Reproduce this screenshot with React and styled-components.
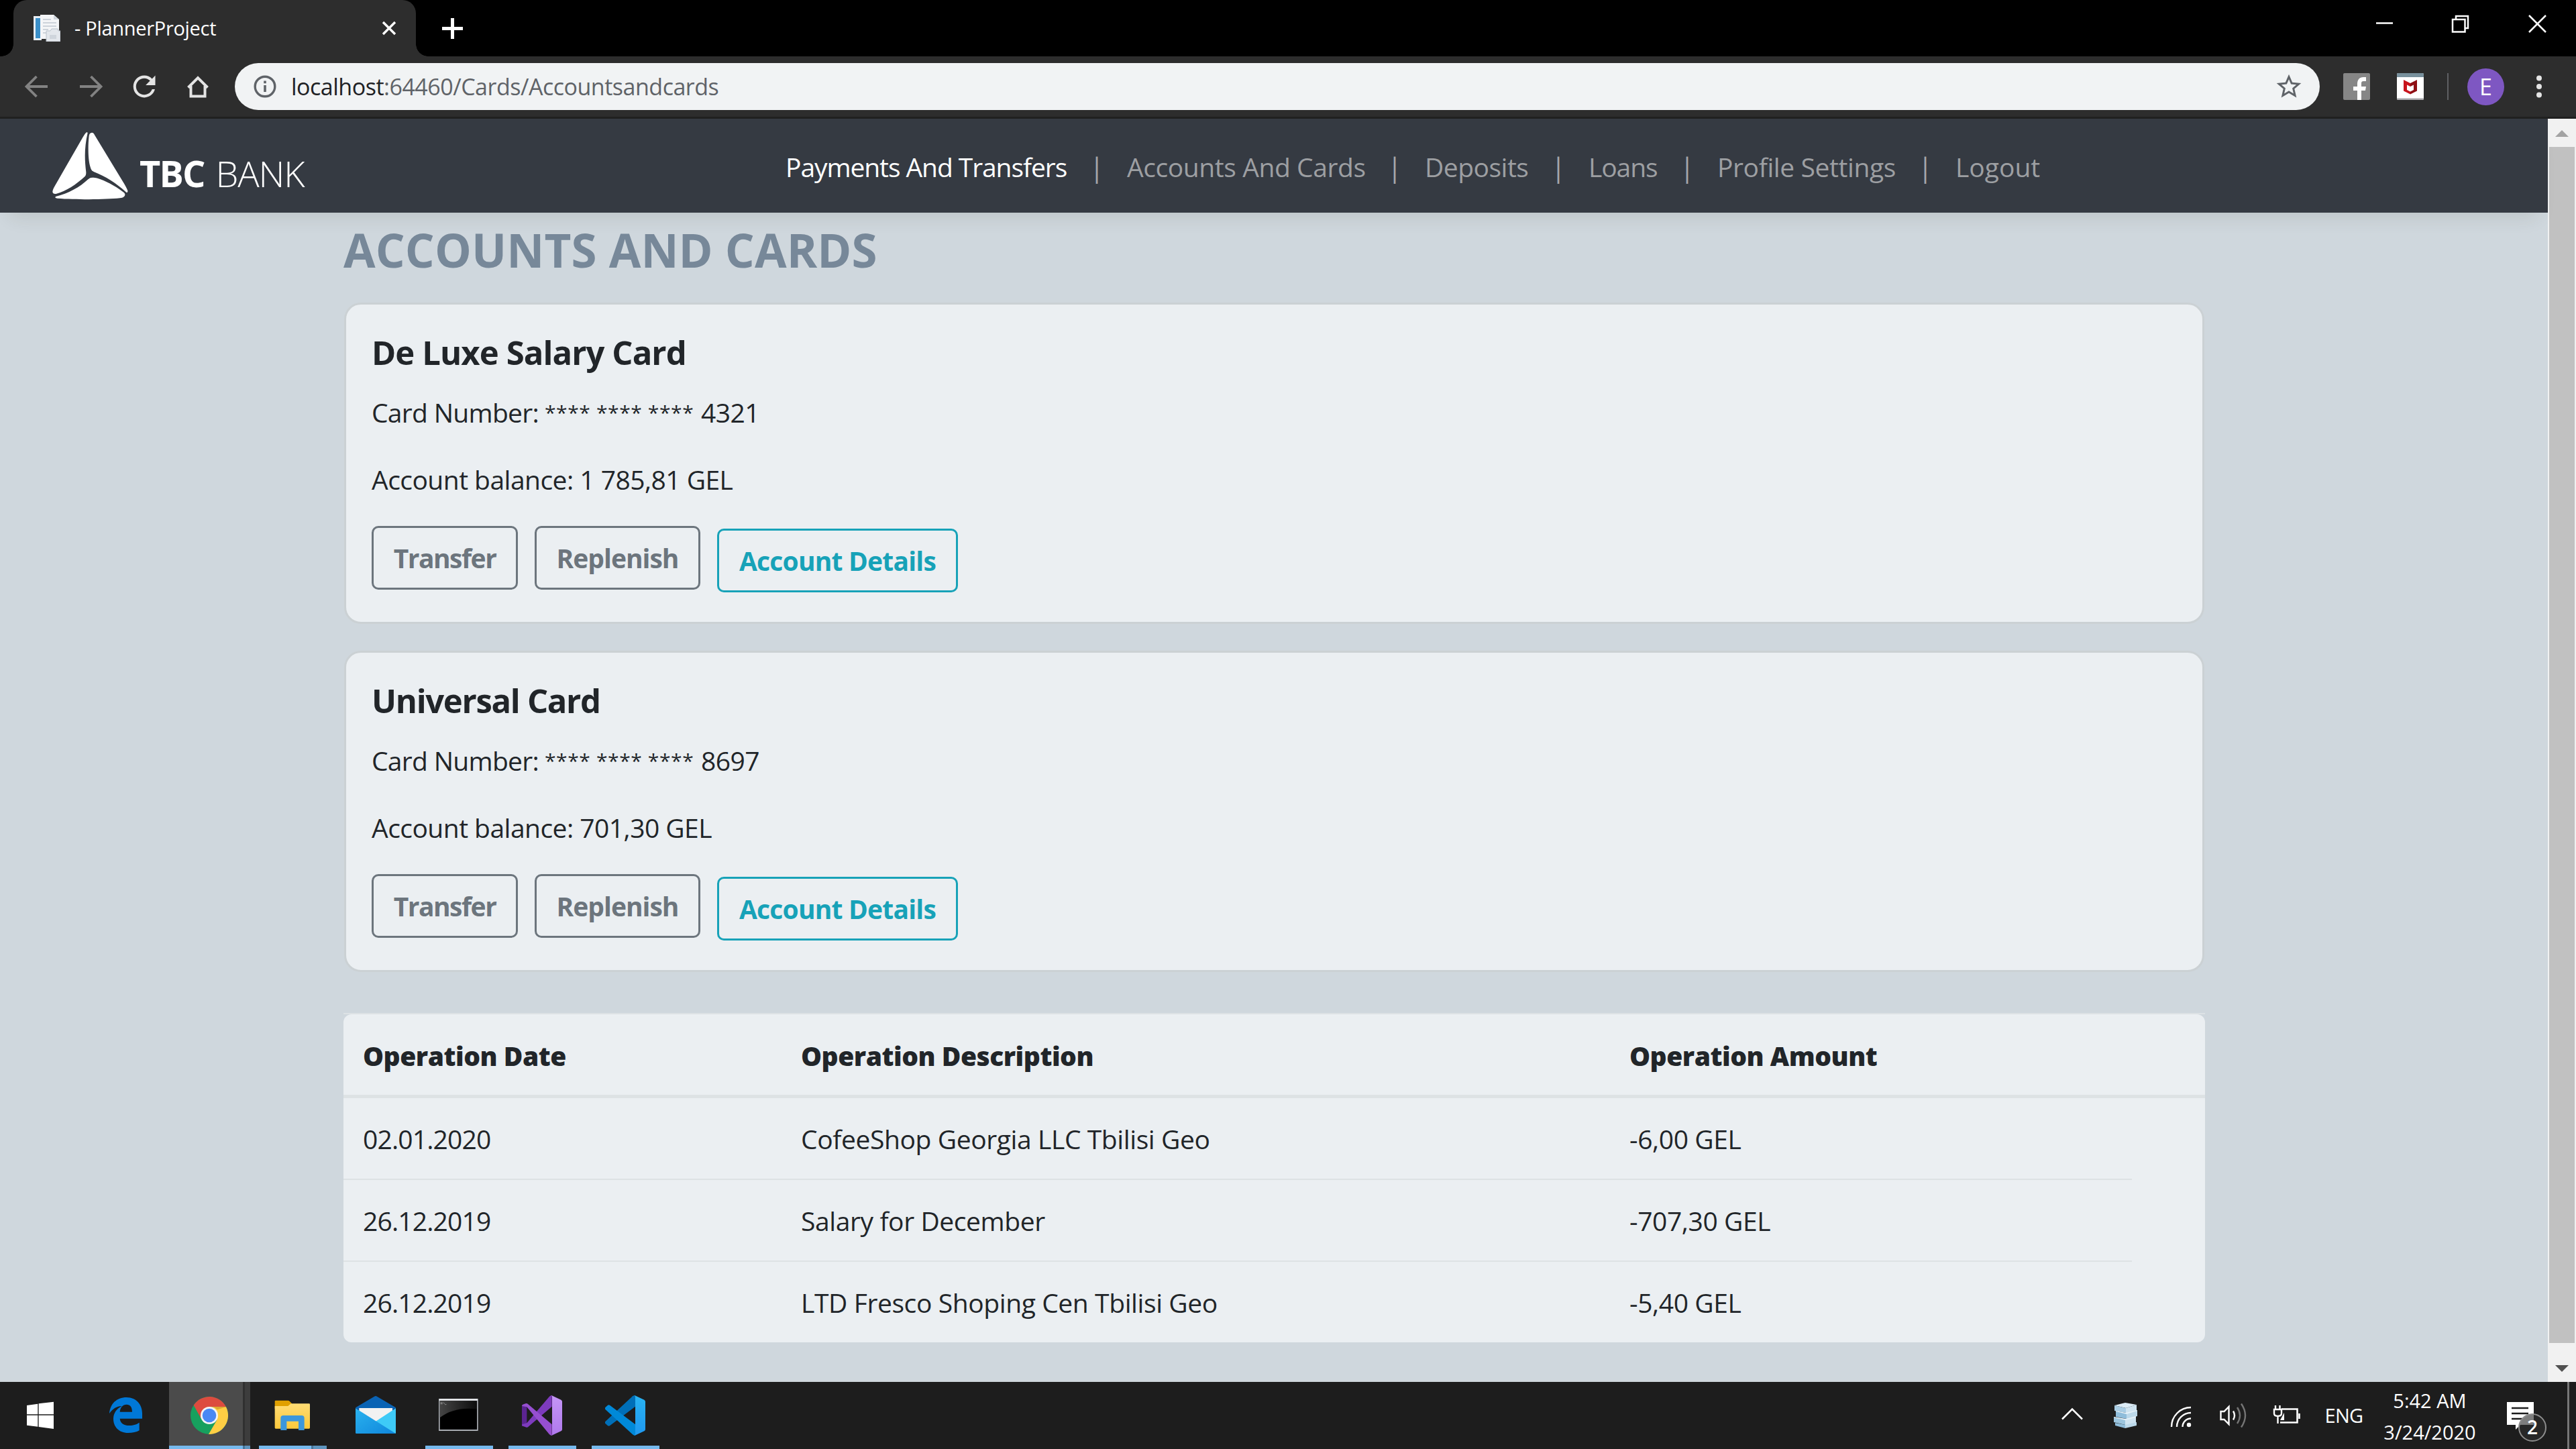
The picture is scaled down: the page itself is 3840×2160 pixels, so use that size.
import React from 'react';
import styled, { createGlobalStyle, css } from 'styled-components';

const GlobalStyle = createGlobalStyle`
  *, *::before, *::after { box-sizing: border-box; }
  html, body { margin: 0; padding: 0; overflow: hidden; background: #000; }
  body { font-family: "Open Sans", "Noto Sans", sans-serif; color: #212529; }
  svg { display: block; flex: none; }
`;

const Screen = styled.div`
  display: flex;
  flex-direction: column;
  width: 3840px;
  height: 2160px;
  overflow: hidden;
`;

/* ---------- browser chrome ---------- */

const TabStrip = styled.header`
  display: flex;
  height: 84px;
  padding-left: 20px;
  background: #000;
  color: #fff;
`;

const Tab = styled.div`
  position: relative;
  display: flex;
  align-items: center;
  width: 600px;
  height: 84px;
  padding: 0 28px 0 30px;
  border-radius: 20px 20px 0 0;
  background: #2d2d2d;

  &::before, &::after {
    content: '';
    position: absolute;
    bottom: 0;
    width: 18px;
    height: 18px;
  }
  &::before { right: 100%; background: radial-gradient(circle at 0 0, transparent 17.5px, #2d2d2d 18px); }
  &::after { left: 100%; background: radial-gradient(circle at 100% 0, transparent 17.5px, #2d2d2d 18px); }
`;

const TabTitle = styled.span`
  flex: 1;
  padding-left: 21px;
  font-size: 29px;
  line-height: 84px;
  letter-spacing: -0.3px;
  white-space: nowrap;
`;

const NewTab = styled.div`
  display: flex;
  align-items: center;
  padding-left: 36px;
`;

const WindowButtons = styled.div`
  display: flex;
  margin-left: auto;
`;

const Toolbar = styled.div`
  display: flex;
  align-items: center;
  height: 93px;
  padding-left: 15px;
  background: #2d2d2d;
  border-bottom: 3px solid #202020;
`;

const ToolbarButtons = styled.div`
  display: flex;
  width: 335px;
`;

const AddressBar = styled.div`
  display: flex;
  align-items: center;
  width: 3108px;
  height: 70px;
  padding: 0 24px;
  border-radius: 35px;
  background: #f1f3f4;
`;

const Url = styled.span`
  flex: 1;
  padding-left: 18px;
  font-size: 34px;
  line-height: 70px;
  letter-spacing: -0.49px;
  color: #5f6368;
  white-space: nowrap;
`;

const Host = styled.span`
  color: #202124;
`;

const Extensions = styled.div`
  display: flex;
  align-items: center;
  padding-left: 35px;
`;

const ExtDivider = styled.div`
  width: 2px;
  height: 40px;
  margin: 0 28px 0 35px;
  background: #5f6063;
`;

const Avatar = styled.div`
  width: 55px;
  height: 55px;
  border-radius: 50%;
  background: #7e57c2;
  color: #fff;
  font-size: 34px;
  line-height: 55px;
  text-align: center;
`;

/* ---------- page ---------- */

const Viewport = styled.div`
  display: flex;
  height: 1883px;
`;

const Page = styled.div`
  width: 3798px;
  background: #cfd7dd;
`;

const NavBar = styled.nav`
  position: relative;
  display: flex;
  align-items: center;
  height: 140px;
  padding-left: 77px;
  background: #353a42;
  box-shadow: 0 22px 26px -16px rgba(60, 60, 30, 0.12);
`;

const Brand = styled.div`
  display: flex;
  align-items: center;
  width: 1094px;
  color: #fff;
`;

const BrandText = styled.span`
  padding-left: 16px;
  margin-top: 22px;
  font-size: 54px;
  line-height: 70px;
  font-weight: 700;
  letter-spacing: -1.8px;
  white-space: nowrap;
`;

const BrandLight = styled.span`
  margin-left: 17px;
  font-weight: 300;
  letter-spacing: -1.2px;
`;

const NavLinks = styled.div`
  display: flex;
  gap: 40px;
  margin-top: 3px;
  line-height: 60px;
`;

const NavLink = styled.a`
  width: ${p => p.$width}px;
  font-size: 39px;
  letter-spacing: ${p => p.$tracking}px;
  color: ${p => (p.$active ? '#fff' : '#9d9fa2')};
  white-space: nowrap;
`;

const NavDivider = styled.span`
  display: flex;
  justify-content: center;
  width: 10px;
  font-size: 40px;
  color: #a5a7aa;
`;

const Main = styled.main`
  width: 2775px;
  margin-left: 512px;
  padding-top: 13px;
`;

const PageTitle = styled.h2`
  margin: 0 0 37px;
  font-size: 69px;
  line-height: 84px;
  font-weight: 700;
  letter-spacing: 0.12px;
  color: #778899;
  white-space: nowrap;
`;

const Card = styled.section`
  height: 479px;
  margin: 0 1px 40px;
  padding: 41px 37px 0 38px;
  border: 3px solid #cbd1d4;
  border-radius: 25px;
  background: #ebeff2;
`;

const CardTitle = styled.h4`
  margin: 0 0 30px;
  font-size: 49px;
  line-height: 60px;
  font-weight: 700;
  letter-spacing: ${p => p.$tracking}px;
`;

const CardLine = styled.p`
  display: flex;
  gap: 10px;
  margin: 0 0 40px;
  font-size: 39px;
  line-height: 60px;
  letter-spacing: -0.53px;
  white-space: pre;
`;

const LineLabel = styled.span`
  width: 248px;
  letter-spacing: -0.7px;
`;

const Mask = styled.span`
  width: 223px;
  font-size: 30px;
  line-height: 60px;
  letter-spacing: 0.6px;
`;

const Actions = styled.div`
  display: flex;
  gap: 25px;
  margin-top: -1px;
`;

const ActionButton = styled.button`
  width: ${p => p.$width}px;
  height: 95px;
  margin-top: ${p => (p.$info ? 4 : 0)}px;
  padding: 0;
  border: 3px solid currentColor;
  border-radius: 10px;
  background: transparent;
  font-family: inherit;
  font-size: 39px;
  font-weight: 700;
  line-height: 90px;
  letter-spacing: ${p => p.$tracking}px;
  white-space: nowrap;
  color: ${p => (p.$info ? '#17a2b8' : '#6c757d')};
`;

const Table = styled.div`
  margin-top: 61px;
  border-top: 2px solid #dde2e5;
`;

const TableBody = styled.div`
  border-radius: 12px;
  background: #ebeff2;
`;

const Cell = styled.div`
  display: flex;
  align-items: center;
  padding-left: 29px;
  white-space: nowrap;
`;

const rowGrid = css`
  display: grid;
  grid-template-columns: 653px 1235px 778px 109px;
`;

const HeadRow = styled.div`
  ${rowGrid}
  height: 125px;
  padding-top: 2px;
  border-bottom: 5px solid #dde2e4;
  font-size: 39px;
  font-weight: 800;
  letter-spacing: -0.48px;
`;

const Row = styled.div`
  ${rowGrid}
  height: ${p => p.$height}px;
  font-size: 39px;
  letter-spacing: -0.4px;

  ${Cell} { border-top: ${p => (p.$first ? 'none' : '2px solid #dde2e4')}; }
  ${Cell}:first-child { letter-spacing: -0.85px; }
`;

const Scrollbar = styled.div`
  display: flex;
  flex-direction: column;
  align-items: center;
  width: 42px;
  background: #f1f1f1;
`;

const ScrollThumb = styled.div`
  width: 38px;
  height: 1783px;
  margin-bottom: 16px;
  background: #c1c1c1;
`;

/* ---------- taskbar ---------- */

const Taskbar = styled.footer`
  display: flex;
  height: 100px;
  background: #1d1d1d;
  color: #fff;
`;

const Slot = styled.div`
  display: flex;
  flex-direction: column;
  align-items: center;
  width: 124px;
  padding-top: 20px;
  background: ${p => (p.$active ? 'linear-gradient(90deg, transparent 2px, #4b4b4b 2px 112px, #303030 112px 115px, #3d3d3d 115px 123px, transparent 123px)' : 'none')};
`;

const StartSlot = styled(Slot)`
  width: 120px;
  margin-right: 6px;
`;

const Underline = styled.div`
  width: ${p => (p.$wide ? 121 : 101)}px;
  height: 5px;
  margin-top: 15px;
  background: ${p => {
    if (p.$wide) return 'linear-gradient(90deg, #76b9ed 110px, #4a7598 110px 113px, #5e94be 113px)';
    if (p.$stacked) return 'linear-gradient(90deg, #76b9ed 78px, #4a7598 78px 81px, #5e94be 81px)';
    return '#76b9ed';
  }};
`;

const Tray = styled.div`
  display: flex;
  width: 791px;
  margin-left: auto;
`;

const Language = styled.div`
  width: 90px;
  font-size: 29px;
  line-height: 100px;
  letter-spacing: -0.7px;
  text-align: center;
`;

const Clock = styled.div`
  display: flex;
  flex-direction: column;
  align-items: center;
  width: 166px;
  padding-top: 4px;
  font-size: 29px;
  line-height: 47px;
  white-space: nowrap;
`;

const Notifications = styled.div`
  position: relative;
  width: 118px;
`;

const Badge = styled.div`
  position: absolute;
  left: 49px;
  top: 47px;
  width: 42px;
  height: 42px;
  border: 2px solid #8d8d8d;
  border-radius: 50%;
  background: rgba(45, 45, 45, 0.62);
  font-size: 28px;
  font-weight: 600;
  line-height: 37px;
  text-align: center;
`;

const DesktopEdge = styled.div`
  width: 3px;
  margin-left: 4px;
  background: #777;
`;

/* ---------- icons ---------- */

const Icon = ({ box, w, h, children }) => (
  <svg width={w} height={h} viewBox={box} fill="none">{children}</svg>
);

const Favicon = () => (
  <Icon box="50 22 40 40" w={40} h={40}>
    <path d="M50 24h12v36H50z" fill="#e8eef3" />
    <path d="M53 27h7v30h-7z" fill="#3a8fc9" />
    <path d="M60 22h20l8 7v29H60z" fill="#f4f5f7" />
    <path d="M80 22l8 7h-8z" fill="#cfd5dc" />
    <path d="M64 29h12M64 34h20M64 39h20M64 44h8M64 49h6" stroke="#cdd3da" strokeWidth="2" />
    <path d="M69 46h6l2-3h9l1 3h3v16H69z" fill="#e3e7ec" stroke="#b9c1ca" />
    <path d="M74 52h10v6H74z" fill="#cfd5dc" />
  </Icon>
);

const TbcMark = () => (
  <Icon box="140 48 345 306" w={115} h={102}>
    <g fill="#fff">
      <path d="M298 51C293 52 289 59 280 73L155 290C148 302 144 311 144 318C145 326 152 328 162 326C205 315 250 285 288 250C293 244 294 240 294 230C287 170 286 120 301 54Z" />
      <path d="M320 53C312 53 308 60 307 68C302 110 303 170 311 200C315 215 318 223 328 228C380 248 430 280 474 320Q481 323 480 313C475 300 470 292 465 283L333 65C329 57 326 53 320 53Z" />
      <path d="M322 254C312 254 308 258 303 262C265 298 215 325 158 339Q152 345 165 347C250 353 380 353 445 346C460 345 468 338 468 330C468 324 464 321 458 317C420 288 380 268 345 257C336 254 330 254 322 254Z" />
    </g>
  </Icon>
);

const TaskIcon = ({ x, children }) => (
  <Icon box={`${x - 90} 60 180 180`} w={60} h={60}>{children}</Icon>
);

const taskIcons = {
  start: (
    <TaskIcon x={180}>
      <path fill="#fff" d="M120 105l49-7v47h-49zM173 97l67-8v56h-67zM120 149h49v51l-49-6zM173 149h67v61l-67-9z" />
    </TaskIcon>
  ),
  edge: (
    <TaskIcon x={564}>
      <path fill="#0078d7" fillRule="evenodd" d="M489 141C493 98 521 69 566 69C611 69 636 103 636 140V164H536C538 186 556 195 578 195C598 195 612 189 623 182V217C610 225 593 228 573 228C530 228 507 199 507 165C507 142 520 120 545 108C525 107 505 119 489 141ZM536 134H591C591 112 582 101 566 101C549 101 538 114 536 134Z" />
    </TaskIcon>
  ),
  chrome: (
    <TaskIcon x={936}>
      <circle cx="936" cy="150" r="84" fill="#17a05e" />
      <path fill="#dd4b3f" d="M866 104A84 84 0 0 1 1011 112H936L900 165Z" />
      <path fill="#ffce44" d="M936 112H1011A84 84 0 0 1 933 234L970 170Z" />
      <path fill="#dca832" d="M955 112H1011L972 124Z" />
      <circle cx="936" cy="150" r="39" fill="#f4f4f4" />
      <circle cx="936" cy="150" r="31" fill="#4a88f4" />
    </TaskIcon>
  ),
  explorer: (
    <TaskIcon x={1308}>
      <defs>
        <linearGradient id="folder" x1="0" y1="0" x2="0" y2="1">
          <stop offset="0" stopColor="#ffdc74" /><stop offset="1" stopColor="#fbc93c" />
        </linearGradient>
      </defs>
      <path fill="#e0a000" d="M1233 83H1288Q1292 83 1295 86L1305 97V120H1229V87Q1229 83 1233 83Z" />
      <path fill="url(#folder)" d="M1229 108H1288L1301 97H1382Q1386 97 1386 101V205Q1386 209 1382 209H1233Q1229 209 1229 205Z" />
      <path fill="#3b97dd" d="M1255 216V162Q1255 150 1267 150H1349Q1361 150 1361 162V216H1335V176H1282V216Z" />
    </TaskIcon>
  ),
  mail: (
    <TaskIcon x={180}>
      <defs>
        <linearGradient id="envelope" x1="0" y1="0" x2="1" y2="1">
          <stop offset="0" stopColor="#2ab2ee" /><stop offset="1" stopColor="#0f86dc" />
        </linearGradient>
      </defs>
      <path fill="#0a63b4" d="M90 115L174 65Q180 61 186 65L270 115V150H90Z" />
      <path fill="#0a4a92" d="M90 115L106 126V118H254V126L270 115V140H90Z" />
      <path fill="#f2f2f2" d="M106 117H255V140L180 190L106 140Z" />
      <path fill="#3ecaf7" d="M270 118V231L160 190Z" />
      <path fill="url(#envelope)" d="M90 118L270 231H94Q90 231 90 227Z" />
    </TaskIcon>
  ),
  cmd: (
    <TaskIcon x={552}>
      <defs>
        <linearGradient id="glare" x1="0" y1="0" x2="1" y2="0">
          <stop offset="0" stopColor="#454545" /><stop offset="1" stopColor="#0c0c0c" />
        </linearGradient>
      </defs>
      <path fill="#a9adb3" d="M462 75H638V219H462Z" />
      <path fill="#e8eaec" d="M464 76H636V83H464Z" />
      <path fill="#000" d="M467 85H633V213H467Z" />
      <path fill="url(#glare)" d="M467 85H633V121Q530 110 467 160Z" />
      <path stroke="#999" strokeWidth="3" d="M472 91V100M477 91V100M483 92L488 98M490 101H496" />
    </TaskIcon>
  ),
  vs: (
    <TaskIcon x={924}>
      <defs>
        <linearGradient id="vsPanel" x1="0" y1="0" x2="0" y2="1">
          <stop offset="0" stopColor="#c596f6" /><stop offset="1" stopColor="#af79ed" />
        </linearGradient>
      </defs>
      <path fill="#5b2491" d="M834 104L856 106V192L834 198Z" />
      <path fill="#7d3bbd" d="M968 60V110L861 202Q856 205 850 202L837 197Q834 195 834 190L856 184L957 65Q962 60 968 60Z" />
      <path fill="#964fd0" d="M834 108Q834 103 838 101L850 97Q856 95 861 99L968 190V240Q962 240 957 235L856 112Z" />
      <path fill="url(#vsPanel)" d="M966 60L1009 80Q1014 83 1014 88V212Q1014 217 1009 220L966 240Q969 237 969 232V68Q969 63 966 60Z" />
    </TaskIcon>
  ),
  code: (
    <TaskIcon x={1296}>
      <defs>
        <linearGradient id="codePanel" x1="0" y1="0" x2="0" y2="1">
          <stop offset="0" stopColor="#29b3f2" /><stop offset="1" stopColor="#1f98f0" />
        </linearGradient>
      </defs>
      <path fill="#006fb8" d="M1341 60V110L1227 196Q1222 199 1217 195L1208 187Q1203 182 1208 176L1329 64Q1334 60 1341 60Z" />
      <path fill="#0089d8" d="M1208 113L1217 105Q1222 101 1227 104L1341 190V240Q1334 240 1329 235L1208 124Q1203 118 1208 113Z" />
      <path fill="url(#codePanel)" d="M1338 60L1381 80Q1386 83 1386 88V212Q1386 217 1381 220L1338 240Q1341 237 1341 232V68Q1341 63 1338 60Z" />
    </TaskIcon>
  ),
};

const TrayIcon = ({ x, children }) => (
  <Icon box={`${x} 2060 80 100`} w={80} h={100}>{children}</Icon>
);

/* ---------- data ---------- */

const navItems = [
  { label: 'Payments And Transfers', width: 419, tracking: -1.08, active: true },
  { label: 'Accounts And Cards', width: 354, tracking: -0.42 },
  { label: 'Deposits', width: 154, tracking: -0.5 },
  { label: 'Loans', width: 102, tracking: -1.1 },
  { label: 'Profile Settings', width: 265, tracking: -0.4 },
  { label: 'Logout', width: 130, tracking: 0 },
];

const cards = [
  { name: 'De Luxe Salary Card', tracking: -0.9, digits: '4321', balance: '1 785,81' },
  { name: 'Universal Card', tracking: -1.3, digits: '8697', balance: '701,30' },
];

const operations = [
  { date: '02.01.2020', text: 'CofeeShop Georgia LLC Tbilisi Geo', amount: '-6,00 GEL', height: 120 },
  { date: '26.12.2019', text: 'Salary for December', amount: '-707,30 GEL', height: 122 },
  { date: '26.12.2019', text: 'LTD Fresco Shoping Cen Tbilisi Geo', amount: '-5,40 GEL', height: 122 },
];

const apps = [
  { id: 'edge' },
  { id: 'chrome', running: true, active: true },
  { id: 'explorer', running: true, stacked: true },
  { id: 'mail' },
  { id: 'cmd', running: true },
  { id: 'vs', running: true },
  { id: 'code', running: true },
];

export default function App() {
  return (
    <Screen>
      <GlobalStyle />

      <TabStrip>
        <Tab>
          <Favicon />
          <TabTitle>- PlannerProject</TabTitle>
          <Icon box="568 28 24 26" w={24} h={26}>
            <path d="M571 32l18 18M589 32l-18 18" stroke="#fff" strokeWidth="3.4" />
          </Icon>
        </Tab>
        <NewTab>
          <Icon box="657 23 37 37" w={37} h={37}>
            <path d="M660 41.5h31M675.5 26v31" stroke="#fff" strokeWidth="5" />
          </Icon>
        </NewTab>
        <WindowButtons>
          <Icon box="3497 0 115 84" w={115} h={84}>
            <path d="M3542 34.5h25" stroke="#fff" strokeWidth="2.5" />
          </Icon>
          <Icon box="3612 0 113 84" w={113} h={84}>
            <path d="M3656 29h18.500v18.500h-18.500zM3661 29v-5h18v18h-4" stroke="#fff" strokeWidth="2.5" />
          </Icon>
          <Icon box="3725 0 115 84" w={115} h={84}>
            <path d="M3770 23l25 25M3795 23l-25 25" stroke="#fff" strokeWidth="2.5" />
          </Icon>
        </WindowButtons>
      </TabStrip>

      <Toolbar>
        <ToolbarButtons>
          <Icon box="15 84 80 90" w={80} h={90}>
            <path d="M71 129H40M54.500 114L39.500 129l15 15" stroke="#828282" strokeWidth="3.8" />
          </Icon>
          <Icon box="95 84 80 90" w={80} h={90}>
            <path d="M119 129h31M135.500 114l15 15-15 15" stroke="#828282" strokeWidth="3.8" />
          </Icon>
          <Icon box="175 84 80 90" w={80} h={90}>
            <path transform="translate(190.500 104.400) scale(2.050)" fill="#e4e4e4" d="M17.650 6.350C16.200 4.900 14.210 4 12 4c-4.420 0-7.990 3.580-7.990 8s3.570 8 7.990 8c3.730 0 6.840-2.550 7.730-6h-2.080c-.82 2.330-3.040 4-5.650 4-3.310 0-6-2.690-6-6s2.690-6 6-6c1.660 0 3.140.69 4.220 1.780L13 11h7V4l-2.350 2.350z" />
          </Icon>
          <Icon box="255 84 80 90" w={80} h={90}>
            <path d="M280.500 130.500L295 116l14.500 14.500M284.500 128v15.500h21V128" stroke="#e4e4e4" strokeWidth="4" />
          </Icon>
        </ToolbarButtons>

        <AddressBar>
          <Icon box="374 108 42 42" w={42} h={42}>
            <circle cx="395" cy="129" r="14.800" stroke="#5f6368" strokeWidth="3.400" />
            <path d="M395 127v10M395 120.500v3.700" stroke="#5f6368" strokeWidth="3.600" />
          </Icon>
          <Url><Host>localhost</Host>:64460/Cards/Accountsandcards</Url>
          <Icon box="0 0 24 24" w={44} h={44}>
            <path fill="#5f6368" d="M22 9.240l-7.190-.62L12 2 9.190 8.630 2 9.240l5.460 4.730L5.820 21 12 17.270 18.180 21l-1.630-7.030L22 9.240zM12 15.400l-3.760 2.270 1-4.280-3.320-2.880 4.380-.38L12 6.100l1.710 4.040 4.380.38-3.320 2.880 1 4.280L12 15.400z" />
          </Icon>
        </AddressBar>

        <Extensions>
          <Icon box="0 0 120 40" w={120} h={40}>
            <rect width="40" height="40" rx="2" fill="#868686" />
            <path fill="#fff" d="M21 40V26h-6v-6h6v-4c0-6 3-10 9-10h4v6h-4c-2 0-3 1-3 3v5h7l-1 6h-6v14z" />
            <rect x="80" width="40" height="40" rx="2" fill="#fff" />
            <path fill="#78909c" d="M82 0h36q2 0 2 2v4H80V2q0-2 2-2z" />
            <path fill="#a8a8ac" d="M80 37.500h40v.5q0 2-2 2H82q-2 0-2-2z" />
            <path fill="#c8141c" d="M90 10l10 5v5l-5-2.500v7.500l5 2.500v4l-10-5z" />
            <path fill="#8e0f14" d="M110 10l-10 5v5l5-2.500v7.500l-5 2.500v4l10-5z" />
          </Icon>
          <ExtDivider />
          <Avatar>E</Avatar>
          <Icon box="3733 84 104 90" w={104} h={90}>
            <g fill="#e4e4e4"><circle cx="3785" cy="116.500" r="4" /><circle cx="3785" cy="129" r="4" /><circle cx="3785" cy="141.500" r="4" /></g>
          </Icon>
        </Extensions>
      </Toolbar>

      <Viewport>
        <Page>
          <NavBar>
            <Brand>
              <TbcMark />
              <BrandText>TBC<BrandLight>BANK</BrandLight></BrandText>
            </Brand>
            <NavLinks>
              {navItems.map((item, i) => (
                <React.Fragment key={item.label}>
                  {i > 0 && <NavDivider>|</NavDivider>}
                  <NavLink $width={item.width} $tracking={item.tracking} $active={item.active}>{item.label}</NavLink>
                </React.Fragment>
              ))}
            </NavLinks>
          </NavBar>

          <Main>
            <PageTitle>ACCOUNTS AND CARDS</PageTitle>

            {cards.map(card => (
              <Card key={card.name}>
                <CardTitle $tracking={card.tracking}>{card.name}</CardTitle>
                <CardLine>
                  <LineLabel>Card Number:</LineLabel>
                  <Mask>**** **** ****</Mask>
                  <span>{card.digits}</span>
                </CardLine>
                <CardLine>{`Account balance: ${card.balance} GEL`}</CardLine>
                <Actions>
                  <ActionButton $width={218} $tracking={-1.5}>Transfer</ActionButton>
                  <ActionButton $width={247} $tracking={-1}>Replenish</ActionButton>
                  <ActionButton $width={359} $tracking={-0.8} $info>Account Details</ActionButton>
                </Actions>
              </Card>
            ))}

            <Table>
              <TableBody>
                <HeadRow>
                  <Cell>Operation Date</Cell>
                  <Cell>Operation Description</Cell>
                  <Cell>Operation Amount</Cell>
                </HeadRow>
                {operations.map((op, i) => (
                  <Row key={op.text} $height={op.height} $first={i === 0}>
                    <Cell>{op.date}</Cell>
                    <Cell>{op.text}</Cell>
                    <Cell>{op.amount}</Cell>
                  </Row>
                ))}
              </TableBody>
            </Table>
          </Main>
        </Page>

        <Scrollbar>
          <Icon box="0 0 42 42" w={42} h={42}><path d="M11 27l10-10 10 10z" fill="#a3a3a3" /></Icon>
          <ScrollThumb />
          <Icon box="0 0 42 42" w={42} h={42}><path d="M11 17l10 10 10-10z" fill="#505050" /></Icon>
        </Scrollbar>
      </Viewport>

      <Taskbar>
        <StartSlot>{taskIcons.start}</StartSlot>
        {apps.map(app => (
          <Slot key={app.id} $active={app.active}>
            {taskIcons[app.id]}
            {app.running && <Underline $wide={app.active} $stacked={app.stacked} />}
          </Slot>
        ))}

        <Tray>
          <TrayIcon x={3049}>
            <path d="M3074 2115.500l15-15 15 15" stroke="#fff" strokeWidth="2.500" />
          </TrayIcon>
          <TrayIcon x={3129}>
            <path fill="#dcecf6" d="M3152 2095l16-4 17 3-16 5z" />
            <path fill="#a9cde4" d="M3152 2095l17 4v7l-17-3z" /><path fill="#cfe4f1" d="M3169 2099l16-5v9l-16 4z" />
            <path fill="#e6f2f9" d="M3154 2103l15 3 17-4v2l-16 5-16-4z" />
            <path fill="#8fbddb" d="M3154 2104l16 4v7l-16-3z" /><path fill="#bcd9ea" d="M3170 2108l16-5v8l-16 5z" />
            <path fill="#e6f2f9" d="M3151 2112l18 3 15-4v3l-15 4-18-4z" />
            <path fill="#9cc5de" d="M3151 2113l17 4v7l-17-4z" /><path fill="#cfe4f1" d="M3168 2117l16-4v8l-16 4z" />
            <path fill="#8fbddb" d="M3153 2121l15 3v5l-15-4z" /><path fill="#bcd9ea" d="M3168 2124l17-4v5l-17 4z" />
          </TrayIcon>
          <TrayIcon x={3209}>
            <g stroke="#fff" strokeWidth="2.400">
              <path d="M3237 2127a29 29 0 0 1 29-29M3245 2127a21 21 0 0 1 21-21M3253.500 2127a12.500 12.500 0 0 1 12.500-12.500" />
            </g>
            <circle cx="3263" cy="2124" r="3.200" fill="#fff" />
          </TrayIcon>
          <TrayIcon x={3289}>
            <path d="M3310.500 2104h5l7-7v26l-7-7h-5z" stroke="#fff" strokeWidth="2.400" />
            <path d="M3329 2103.500q4 6.500 0 13" stroke="#fff" strokeWidth="2.400" />
            <path d="M3335 2098q8 12 0 24M3341 2092.500q12 17.500 0 35" stroke="#757575" strokeWidth="2.400" />
          </TrayIcon>
          <TrayIcon x={3369}>
            <path d="M3401 2100.500h23.500v20h-25.500M3427.500 2107v8" stroke="#fff" strokeWidth="2.600" />
            <path d="M3392 2095v6M3398.500 2095v6M3390 2101h11v6q0 4-5.500 4t-5.500-4zM3395.500 2111v11" stroke="#fff" strokeWidth="2.400" />
            <path d="M3399 2117l6-11v11z" fill="#fff" />
          </TrayIcon>
          <Language>ENG</Language>
          <Clock>
            <span>5:42 AM</span>
            <span>3/24/2020</span>
          </Clock>
          <Notifications>
            <Icon box="3705 2060 104 100" w={104} h={100}>
              <path fill="#fff" d="M3737 2090h40v34h-20l-7 7v-7h-13z" />
              <path d="M3744 2099h25M3744 2107h25M3744 2115h16" stroke="#1d1d1d" strokeWidth="2.400" />
            </Icon>
            <Badge>2</Badge>
          </Notifications>
          <DesktopEdge />
        </Tray>
      </Taskbar>
    </Screen>
  );
}
